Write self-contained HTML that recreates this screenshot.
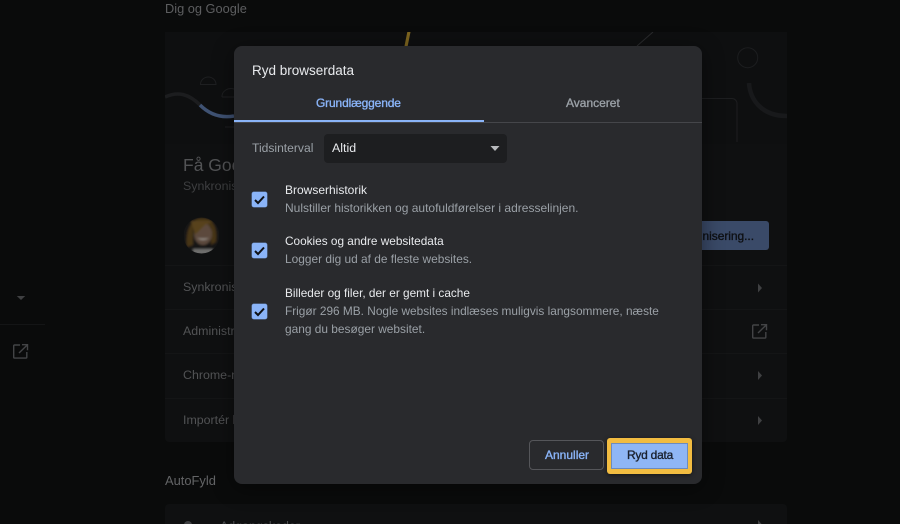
<!DOCTYPE html>
<html lang="da"><head><meta charset="utf-8"><title>Ryd browserdata</title>
<style>
html,body{margin:0;padding:0;background:#0a0b0b}
#p{position:relative;width:900px;height:524px;overflow:hidden;background:#0a0b0b;font-family:"Liberation Sans",sans-serif;filter:blur(.25px)}
.a{position:absolute;white-space:nowrap}
.t{font-size:12.400px;line-height:16px}
.bg{color:#525355}
.card{position:absolute;left:165px;width:622px;background:#0f1011;border-radius:4px}
.ln{position:absolute;left:165px;width:622px;height:1px;background:#141516}
#d{position:absolute;left:234px;top:46px;width:468px;height:438px;background:#292a2d;border-radius:8px;box-shadow:0 4px 22px rgba(0,0,0,.45)}
.cb{position:absolute;left:252px;width:15px;height:15px;background:#8ab4f8;border-radius:2px;box-shadow:0 0 0 .5px #5f7fb0}
.cb svg{display:block}
.h{color:#e8eaed;line-height:16px}
.s{color:#9aa0a6;line-height:20px}
.m{font-weight:normal;-webkit-text-stroke:.35px currentColor;line-height:16px}
</style></head><body><div id="p">

<div class="a" style="left:165px;top:1px;font-size:12.800px;line-height:16px;color:#5d5e60">Dig og Google</div>
<div class="card" style="top:32px;height:410px"></div>
<div class="a" style="left:165px;top:32px;width:622px;height:112px;background:#0e0f10"></div>

<svg class="a" style="left:165px;top:32px" width="622" height="114" viewBox="165 32 622 114" fill="none">
<path d="M165 97C178 91 189 94 200 105" stroke="#1c1d1f" stroke-width="3.500"/>
<path d="M200 105C210 115 222 118 234 116" stroke="#3f5273" stroke-width="3.500"/>
<path d="M200.500 84.500a7.700 7.500 0 0 1 15.500 0z" stroke="#1e1f21"/>
<path d="M222 97a9 8 0 0 1 12-8M222 97h12M225 127h9" stroke="#1e1f21"/>
<path d="M404.500 46l2.800-14h3.200l-2.800 14z" fill="#7d651f"/>
<path d="M637 46l16-14" stroke="#2a2b2d"/>
<circle cx="747.700" cy="57.700" r="10" stroke="#1c1d1f"/>
<path d="M749 83c1 16 12 33 38 33" stroke="#18191b" stroke-width="4.500"/>
<path d="M702 98.500h30a5 5 0 0 1 5 5V142" stroke="#1d1e20"/>
</svg>

<div class="a" style="left:183px;top:154px;font-size:17.500px;line-height:22px;color:#525355">Få Google</div>
<div class="a t" style="left:183px;top:178px;color:#3e3f41">Synkronisér</div>

<svg class="a" style="left:183px;top:217px" width="37" height="37" viewBox="0 0 37 37">
<defs><clipPath id="c"><circle cx="18.500" cy="18.500" r="18"/></clipPath>
<filter id="b"><feGaussianBlur stdDeviation="1"/></filter></defs>
<g clip-path="url(#c)"><g filter="url(#b)">
<rect width="37" height="37" fill="#161514"/>
<path d="M4 30C2 14 8 1 19 1s16 10 14 24l-5 3V10H10v18z" fill="#473419"/>
<ellipse cx="20" cy="17" rx="9" ry="11" fill="#5c4a3e"/>
<path d="M8 4h22L22 8 12 18z" fill="#58421f"/>
<path d="M14 21q6 4 12 0q-6 1-12 0z" fill="#9a928a"/>
<rect x="10" y="32" width="20" height="6" fill="#6e6e6d"/>
</g></g></svg>

<div class="a" style="left:660px;top:221px;width:109px;height:29px;background:#3a4a68;border-radius:3px"></div>
<div class="a m" style="right:146px;top:228px;font-size:12px;color:#0e1014;letter-spacing:-.05px">nisering...</div>

<div class="ln" style="top:265px"></div>
<div class="ln" style="top:309px"></div>
<div class="ln" style="top:353px"></div>
<div class="ln" style="top:398px"></div>

<div class="a bg t" style="left:183px;top:279px">Synkronisering</div>
<div class="a bg t" style="left:183px;top:323px">Administrér</div>
<div class="a bg t" style="left:183px;top:367px">Chrome-navn</div>
<div class="a bg t" style="left:183px;top:412px">Importér bogmærker</div>

<svg class="a" style="left:750px;top:280px" width="20" height="160" fill="#3f4042">
<path d="M8 3.500l4 4.500-4 4.500z"/>
<path d="M8 91l4 4.500-4 4.500z"/>
<path d="M8 136l4 4.500-4 4.500z"/>
</svg>
<svg class="a" style="left:752px;top:324px" width="16" height="15" viewBox="0 0 16 15" fill="none" stroke="#434446" stroke-width="1.400">
<path d="M7 1H1.500a.8.800 0 0 0-.8.800v11.500a.8.800 0 0 0 .8.800h11.500a.8.800 0 0 0 .8-.8V8"/><path d="M9 .7h5.500v5.500M14.500 .7L6 9"/></svg>

<svg class="a" style="left:16px;top:294px" width="10" height="8" fill="#3f4042"><path d="M.800 2h8.400l-4.200 4z"/></svg>
<div class="a" style="left:0;top:324px;width:45px;height:1px;background:#141516"></div>
<svg class="a" style="left:13px;top:344px" width="16" height="15" viewBox="0 0 16 15" fill="none" stroke="#434446" stroke-width="1.400">
<path d="M7 1H1.500a.8.800 0 0 0-.8.800v11.500a.8.800 0 0 0 .8.800h11.500a.8.800 0 0 0 .8-.8V8"/><path d="M9 .7h5.500v5.500M14.500 .7L6 9"/></svg>

<div class="a" style="left:165px;top:473px;font-size:12.900px;line-height:16px;color:#636466">AutoFyld</div>
<div class="card" style="top:504px;height:30px"></div>
<div class="a" style="left:184px;top:521px;width:8px;height:8px;border-radius:50%;background:#3f4042"></div>
<div class="a t" style="left:220px;top:518px;color:#4a4b4d">Adgangskoder</div>
<svg class="a" style="left:750px;top:518px" width="20" height="12" fill="#3f4042"><path d="M8 2l4 4.500-4 4.500z"/></svg>

<div id="d"></div>
<div class="a" style="left:252px;top:62px;font-size:13.500px;line-height:18px;color:#e8eaed">Ryd browserdata</div>
<div class="a m" style="left:316px;top:95px;font-size:12px;color:#8ab4f8;letter-spacing:-.15px">Grundlæggende</div>
<div class="a m" style="left:566px;top:95px;font-size:12px;color:#9aa0a6">Avanceret</div>
<div class="a" style="left:234px;top:122px;width:468px;height:1px;background:#45464a"></div>
<div class="a" style="left:234px;top:120px;width:249.500px;height:2px;background:#8ab4f8"></div>

<div class="a" style="left:252px;top:140px;font-size:12.100px;line-height:16px;color:#9aa0a6">Tidsinterval</div>
<div class="a" style="left:324px;top:134px;width:183px;height:29px;background:#1d1e20;border-radius:4px"></div>
<div class="a" style="left:332px;top:140px;font-size:12.400px;line-height:16px;color:#e8eaed">Altid</div>
<svg class="a" style="left:490px;top:145px" width="11" height="7" fill="#b8babd"><path d="M.500 1h9l-4.500 5z"/></svg>

<div class="cb" style="top:192px"><svg width="15" height="15" viewBox="0 0 15 15" fill="none"><path d="M3 8l3 3 6-6.500" stroke="#0e1115" stroke-width="2"/></svg></div>
<div class="a h" style="left:285px;top:182px;font-size:12px">Browserhistorik</div>
<div class="a s" style="left:285px;top:198px;font-size:12px">Nulstiller historikken og autofuldførelser i adresselinjen.</div>

<div class="cb" style="top:243px"><svg width="15" height="15" viewBox="0 0 15 15" fill="none"><path d="M3 8l3 3 6-6.500" stroke="#0e1115" stroke-width="2"/></svg></div>
<div class="a h" style="left:285px;top:233px;font-size:11.800px">Cookies og andre websitedata</div>
<div class="a s" style="left:285px;top:249px;font-size:11.900px">Logger dig ud af de fleste websites.</div>

<div class="cb" style="top:304px"><svg width="15" height="15" viewBox="0 0 15 15" fill="none"><path d="M3 8l3 3 6-6.500" stroke="#0e1115" stroke-width="2"/></svg></div>
<div class="a h" style="left:285px;top:285px;font-size:11.800px">Billeder og filer, der er gemt i cache</div>
<div class="a s" style="left:285px;top:301px;font-size:11.850px">Frigør 296 MB. Nogle websites indlæses muligvis langsommere, næste</div>
<div class="a s" style="left:285px;top:319px;font-size:11.900px">gang du besøger websitet.</div>

<div class="a" style="left:529px;top:440px;width:73px;height:28px;border:1px solid #55565a;border-radius:4px"></div>
<div class="a m" style="left:545px;top:447px;font-size:12px;color:#8ab4f8">Annuller</div>
<div class="a" style="left:607px;top:438px;width:85px;height:36px;background:#f2bc41;border-radius:3px;box-shadow:0 1px 4px rgba(0,0,0,.5)"></div>
<div class="a" style="left:612px;top:444px;width:75px;height:24px;background:#8fb6f5;box-shadow:0 0 0 1px #6b8bbf"></div>
<div class="a m" style="left:627px;top:447px;font-size:12px;color:#1b2230;letter-spacing:-.25px">Ryd data</div>

</div></body></html>
